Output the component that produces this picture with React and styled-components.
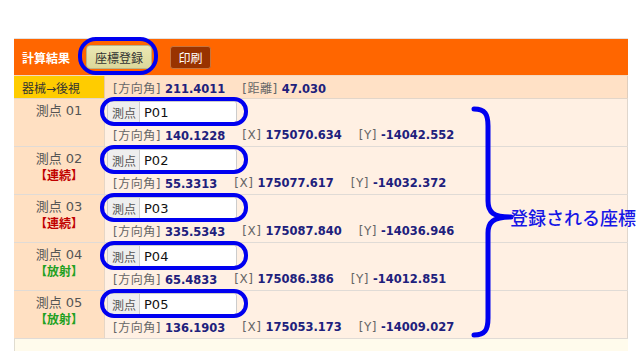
import styled, { createGlobalStyle } from "styled-components"

const GlobalStyle = createGlobalStyle`
body{
    margin: 0;
    background: #fff;
    font-family: "DejaVu Sans", "Noto Sans CJK JP", sans-serif;
}
`

const points = [
    { no: "01", id: "P01", angle: "140.1228", x: "175070.634", y: "-14042.552" },
    { no: "02", id: "P02", tag: "連続", angle: "55.3313", x: "175077.617", y: "-14032.372" },
    { no: "03", id: "P03", tag: "連続", angle: "335.5343", x: "175087.840", y: "-14036.946" },
    { no: "04", id: "P04", tag: "放射", angle: "65.4833", x: "175086.386", y: "-14012.851" },
    { no: "05", id: "P05", tag: "放射", angle: "136.1903", x: "175053.173", y: "-14009.027" },
]

function Item({ label, value }) {
    return (
        <Pair>
            <Label>[{label}]</Label>
            <Value>{value}</Value>
        </Pair>
    )
}

export default function App() {
    return (
        <>
        <GlobalStyle/>
        <Page>
            <Table>
                <Header>
                    <Title>計算結果</Title>
                    <Circled>
                        <RegisterButton>座標登録</RegisterButton>
                    </Circled>
                    <PrintButton>印刷</PrintButton>
                </Header>
                <BacksightRow>
                    <InstrumentCell>器械→後視</InstrumentCell>
                    <BacksightCell>
                        <Item label="方向角" value="211.4011"/>
                        <Item label="距離" value="47.030"/>
                    </BacksightCell>
                </BacksightRow>
                {points.map((p) => (
                    <Row key={p.no}>
                        <PointCell>
                            <PointName>測点 {p.no}</PointName>
                            {p.tag ? <Tag kind={p.tag}>【{p.tag}】</Tag> : null}
                        </PointCell>
                        <DataCell>
                            <Circled wide>
                                <InputGroup>
                                    <Addon>測点</Addon>
                                    <Input value={p.id} readOnly/>
                                </InputGroup>
                            </Circled>
                            <Line>
                                <Item label="方向角" value={p.angle}/>
                                <Item label="X" value={p.x}/>
                                <Item label="Y" value={p.y}/>
                            </Line>
                        </DataCell>
                    </Row>
                ))}
                <Footer/>
                <Brace width="50" height="234" viewBox="0 0 50 234">
                    <path d="M5 3 C16 3 19 8 19 20 L19 95 C19 106 24 111 42 111 C24 111 19 116 19 127 L19 212 C19 224 16 229 5 229"
                        fill="none" stroke="#0000f0" strokeWidth="5" strokeLinecap="round" strokeLinejoin="round"/>
                </Brace>
                <Note>登録される座標</Note>
            </Table>
        </Page>
        </>
    )
}

const Page = styled.div`
padding: 38px 12px 0 14px;
`

const Table = styled.div`
position: relative;
width: 614px;
border-top: 1px solid #e2e2e2;
font-size: 12px;
`

const Header = styled.div`
display: flex;
align-items: center;
height: 36px;
padding-left: 8px;
background-color: #ff6600;
`

const Title = styled.span`
color: #fff;
font-weight: bold;
margin-right: 16px;
`

const Circled = styled.div`
position: relative;
display: inline-flex;
&::after{
    content: "";
    position: absolute;
    top: ${(p) => (p.wide ? "-4px" : "-8px")};
    bottom: ${(p) => (p.wide ? "-3px" : "-6px")};
    left: ${(p) => (p.wide ? "-7px" : "-8px")};
    right: ${(p) => (p.wide ? "-11px" : "-6px")};
    border: 4px solid #0000f0;
    border-radius: ${(p) => (p.wide ? "14px" : "18px")};
    pointer-events: none;
}
`

const RegisterButton = styled.button`
width: 66px;
height: 24px;
padding: 0;
background: linear-gradient(#ebe8b4, #dcd89a);
border: 1px solid #b9b488;
border-radius: 4px;
color: #333;
font-family: inherit;
font-size: 12px;
`

const PrintButton = styled.button`
width: 41px;
height: 23px;
margin-left: 18px;
padding: 0;
background-color: #993300;
border: 1px solid #c8743c;
border-radius: 3px;
color: #fff;
font-family: inherit;
font-size: 12px;
`

const BacksightRow = styled.div`
display: flex;
height: 22px;
border-top: 1px solid #f3d9c0;
border-bottom: 1px solid #e2d6ca;
`

const InstrumentCell = styled.div`
width: 82px;
padding-left: 8px;
display: flex;
align-items: center;
background-color: #ffcc00;
border-right: 1px solid #e8c8a8;
color: #333;
`

const BacksightCell = styled.div`
flex: 1;
display: flex;
align-items: center;
padding-left: 8px;
background-color: #ffe1c6;
border-right: 1px solid #e0cdbb;
`

const Row = styled.div`
display: flex;
height: 47px;
border-bottom: 1px solid #e0dbd6;
`

const PointCell = styled.div`
width: 90px;
padding-top: 3px;
display: flex;
flex-direction: column;
align-items: center;
background-color: #ffe0c2;
border-right: 1px solid #e6d6c6;
`

const PointName = styled.span`
color: #555;
font-size: 13px;
line-height: 17px;
`

const Tag = styled.span`
font-weight: bold;
line-height: 18px;
color: ${(p) => (p.kind === "連続" ? "#c00000" : "#22a022")};
`

const DataCell = styled.div`
flex: 1;
display: flex;
flex-direction: column;
align-items: flex-start;
padding: 2px 0 0 2px;
background-color: #fff0e3;
border-right: 1px solid #e0d6cc;
`

const InputGroup = styled.div`
display: flex;
height: 20px;
width: 128px;
border: 1px solid #ccc;
border-radius: 3px;
overflow: hidden;
`

const Addon = styled.span`
display: flex;
align-items: center;
padding: 0 3px 0 4px;
background-color: #eee;
border-right: 1px solid #ccc;
color: #555;
`

const Input = styled.input`
flex: 1;
min-width: 0;
border: none;
padding: 0 4px;
font-family: inherit;
font-size: 13px;
color: #111;
background: #fff;
outline: none;
`

const Line = styled.div`
display: flex;
align-items: center;
height: 24px;
padding-left: 6px;
`

const Pair = styled.span`
margin-right: 17px;
white-space: nowrap;
`

const Label = styled.span`
color: #666;
margin-right: 4px;
letter-spacing: 0.5px;
`

const Value = styled.span`
color: #20207c;
font-weight: bold;
font-size: 11.5px;
`

const Footer = styled.div`
height: 12px;
background-color: #fffbec;
border-left: 1px solid #e0dcd0;
`

const Brace = styled.svg`
position: absolute;
left: 455px;
top: 67px;
`

const Note = styled.span`
position: absolute;
left: 496px;
top: 165px;
color: #1616e6;
font-family: "Noto Sans CJK JP", sans-serif;
font-size: 18px;
font-weight: 500;
white-space: nowrap;
`
